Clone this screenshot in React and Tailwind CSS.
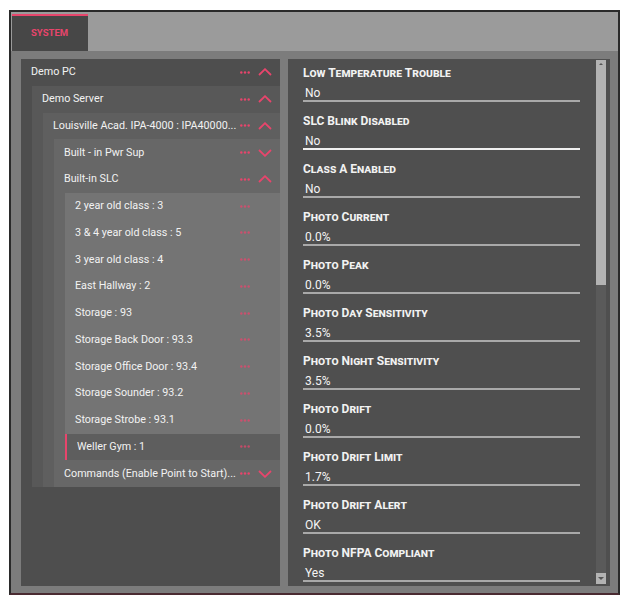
import React from "react";

const tree = {
	label: "Demo PC",
	open: true,
	children: [
		{
			label: "Demo Server",
			open: true,
			children: [
				{
					label: "Louisville Acad. IPA-4000 : IPA40000...",
					open: true,
					children: [
						{ label: "Built - in Pwr Sup", open: false },
						{
							label: "Built-in SLC",
							open: true,
							children: [
								{ label: "2 year old class : 3" },
								{ label: "3 & 4 year old class : 5" },
								{ label: "3 year old class : 4" },
								{ label: "East Hallway : 2" },
								{ label: "Storage : 93" },
								{ label: "Storage Back Door : 93.3" },
								{ label: "Storage Office Door : 93.4" },
								{ label: "Storage Sounder : 93.2" },
								{ label: "Storage Strobe : 93.1" },
								{ label: "Weller Gym : 1", selected: true },
							],
						},
						{ label: "Commands (Enable Point to Start)...", open: false },
					],
				},
			],
		},
	],
};

const levelBg = ["bg-[#585858]", "bg-[#5f5f5f]", "bg-[#676767]", "bg-[#747474]"];

const fields = [
	{ label: "Low Temperature Trouble", value: "No" },
	{ label: "SLC Blink Disabled", value: "No", active: true },
	{ label: "Class A Enabled", value: "No" },
	{ label: "Photo Current", value: "0.0%" },
	{ label: "Photo Peak", value: "0.0%" },
	{ label: "Photo Day Sensitivity", value: "3.5%" },
	{ label: "Photo Night Sensitivity", value: "3.5%" },
	{ label: "Photo Drift", value: "0.0%" },
	{ label: "Photo Drift Limit", value: "1.7%" },
	{ label: "Photo Drift Alert", value: "OK" },
	{ label: "Photo NFPA Compliant", value: "Yes" },
];

const Dots = ({ dim }) => (
	<svg width="10" height="3" viewBox="0 0 10 3" className={dim ? "opacity-75" : ""}>
		<circle cx="1.3" cy="1.5" r="1.2" fill="#e8456c" />
		<circle cx="5" cy="1.5" r="1.2" fill="#e8456c" />
		<circle cx="8.7" cy="1.5" r="1.2" fill="#e8456c" />
	</svg>
);

const Chevron = ({ up }) => (
	<svg width="14" height="8" viewBox="0 0 14 8">
		<polyline
			points={up ? "1,7 7,1.2 13,7" : "1,1 7,6.8 13,1"}
			fill="none"
			stroke="#e8456c"
			strokeWidth="1.8"
		/>
	</svg>
);

const Row = ({ node, leaf }) => (
	<div
		className={`h-[26.75px] flex items-center pl-[10px] pr-[8px] text-[10.75px] text-[#f2f2f2] ${
			node.selected ? "bg-[#5e5e5e] border-l-2 border-[#e8456c] pl-[9px]" : ""
		}`}
	>
		<span className="flex-1 whitespace-nowrap overflow-hidden">{node.label}</span>
		<div className="flex items-center gap-[8px]">
			<Dots dim={leaf} />
			<div className="w-[14px] flex items-center">{!leaf && <Chevron up={node.open} />}</div>
		</div>
	</div>
);

const Node = ({ node, depth }) => {
	const leaf = !node.children && node.open === undefined;
	return (
		<>
			<Row node={node} leaf={leaf} />
			{node.children && (
				<div className={`ml-[11px] ${levelBg[depth]}`}>
					{node.children.map((c) => (
						<Node key={c.label} node={c} depth={depth + 1} />
					))}
				</div>
			)}
		</>
	);
};

const App = () => {
	return (
		<div className="w-[626px] h-[611px] bg-white pt-[10px] pl-[9px]" style={{ fontFamily: "Roboto, 'Liberation Sans', sans-serif" }}>
			<div className="w-[611px] h-[585px] border-2 border-[#2a2a2a] border-b-[#4a2a31] bg-[#7c7c7c] flex flex-col overflow-hidden">
				<div className="h-[39px] shrink-0 bg-[#9b9b9b] flex pl-[1px] pt-[2px]">
					<div className="w-[76px] h-full bg-[#474747] border-t-2 border-[#e8456c] flex items-center pl-[19px]">
						<span className="text-[9.5px] font-bold text-[#e8456c]">SYSTEM</span>
					</div>
				</div>
				<div className="flex-1 min-h-0 flex pl-[10px] pr-[8px] pt-[8px] pb-[7px] gap-[8px]">
					<div className="w-[259px] bg-[#4e4e4e] overflow-hidden">
						<Node node={tree} depth={0} />
					</div>
					<div className="w-[322px] bg-[#4f4f4f] flex overflow-hidden">
						<div className="flex-1 pt-[6px] pl-[15px] pr-[16px] overflow-hidden">
							{fields.map((f) => (
								<div key={f.label} className="mb-[11px]">
									<div className="h-[16px] flex items-center text-[12px] font-bold text-[#f2f2f2]" style={{ fontVariant: "small-caps" }}>
										{f.label}
									</div>
									<div
										className={`mt-[5px] h-[16px] pl-[2px] flex items-center text-[12px] text-[#f4f4f4] border-b-2 ${
											f.active ? "border-[#f0f0f0]" : "border-[#a9a9a9]"
										}`}
									>
										{f.value}
									</div>
								</div>
							))}
						</div>
						<div className="w-[10px] mr-[4px] mt-[1px] mb-[2px] flex flex-col bg-[#5a5a5a]">
							<div className="h-[225px] bg-[#b3b3b3] flex justify-center pt-[3px]">
								<div className="w-0 h-0 border-l-[2px] border-r-[2px] border-b-[2px] border-l-transparent border-r-transparent border-b-[#555]" />
							</div>
							<div className="flex-1" />
							<div className="h-[11px] bg-[#b3b3b3] flex justify-center items-center">
								<div className="w-0 h-0 border-l-[3px] border-r-[3px] border-t-[3px] border-l-transparent border-r-transparent border-t-[#555]" />
							</div>
						</div>
					</div>
				</div>
			</div>
		</div>
	);
};

export default App;
